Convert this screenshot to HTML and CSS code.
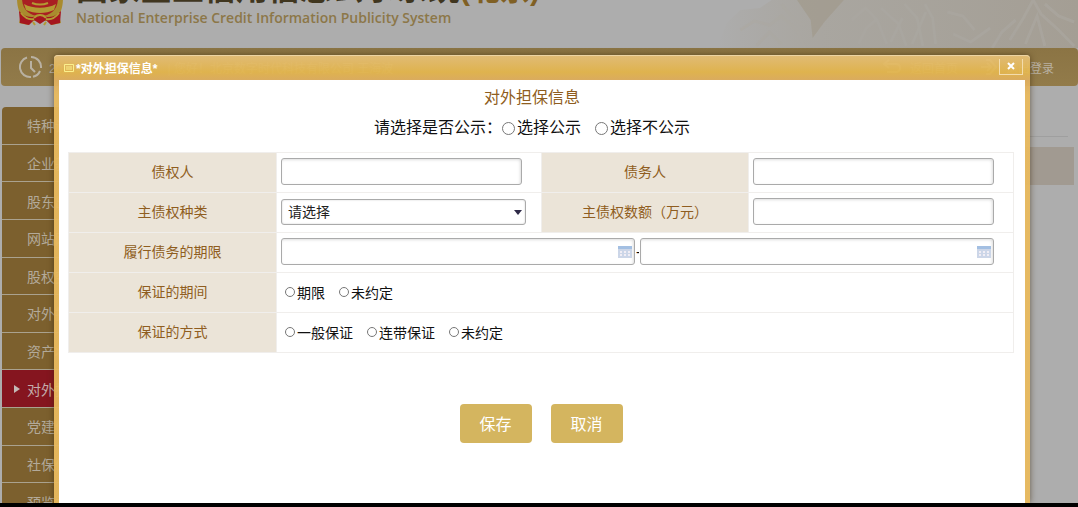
FILE: index.html
```
<!DOCTYPE html>
<html lang="zh-CN">
<head>
    <meta charset="UTF-8">
    <meta name="viewport" content="width=device-width, initial-scale=1.0">
    <title>对外担保信息</title>
    <link rel="stylesheet" href="styles.css">
</head>
<body>

    <div class="page">

        <header class="header">
            <svg class="emblem" viewBox="0 0 48 52">
                <path d="M24 1C9 1 1 11 1 24c0 8 2 14 4 17l-2 8 9 2 5-4h14l5 4 9-2-2-8c2-3 4-9 4-17C47 11 39 1 24 1z" fill="#a98b2e"/>
                <path d="M24 5C12 5 6 13 6 24s7 18 18 18 18-7 18-18S36 5 24 5z" fill="#a91f22"/>
                <path d="M13 25h22l-3-5H16zM8 30c9 5 23 5 32 0l-2 6c-8 4-20 4-28 0z" fill="#b39a33"/>
                <path d="M16 29c5 2 11 2 16 0" fill="none" stroke="#b39a33" stroke-width="2"/>
                <path d="M3 37c5 5 9 6 14 6l7-3 7 3c5 0 9-1 14-6l-1 12-9 2-5-5-6 4-6-4-5 5-9-2z" fill="#a5161f"/>
                <path d="M5 39c4 5 9 7 13 6M43 39c-4 5-9 7-13 6M18 44c3-4 9-4 12 0M17 48l2 3M30 48l-2 3" fill="none" stroke="#b39a33" stroke-width="2"/>
            </svg>
            <div class="brand">
                <div class="brand-name">国家企业信用信息公示系统<span>(北京)</span></div>
                <div class="brand-en">National Enterprise Credit Information Publicity System</div>
            </div>
            <svg class="mountain" viewBox="0 0 370 48" preserveAspectRatio="none">
                <defs>
                    <linearGradient id="fade">
                        <stop offset="0" stop-color="#a49c8e" stop-opacity="0"/>
                        <stop offset="0.3" stop-color="#a6a197" stop-opacity="0.6"/>
                        <stop offset="1" stop-color="#a49e94"/>
                    </linearGradient>
                </defs>
                <path d="M0 48l10-25 14-13 20-2 12-8h314v48z" fill="url(#fade)"/>
                <path d="M82 0l14 20 2 18 12-16 20-22z" fill="#a19a8c" opacity="0.7"/>
                <g fill="none" stroke="#aba8a2" stroke-width="3" opacity="0.6">
                    <path d="M24 30l14-9 16 4 12-9 16 14 8 18M40 46l14-14 12 12M66 4l12 14 12 8"/>
                    <path d="M138 20l14-12 12 12 10 24M145 44l8-16 10-8M168 8l18 16 8 22M192 4l13 14 6 28M213 4l8 14 3 26"/>
                    <path d="M178 42l12-24M200 44l14-32M236 12l16 4 12 14M242 34l18 8 20-14"/>
                    <path d="M300 40l14-22 10-18 8 14 18 16 16 16M316 44l12-28 8 30M336 4l14 12 16 6M306 20l-14 12-10 16"/>
                </g>
            </svg>
        </header>

        <div class="topbar">
            <svg class="clock" viewBox="0 0 24 24">
                <path d="M8 2.500A10 10 0 0 0 12 22M14 21.800A10 10 0 0 0 21 16M22 13A10 10 0 0 0 12 2M12 6v7l4 4"/>
            </svg>
            <span>2018年05月11日</span>
            <span class="welcome">| 您好！北京数字时代科技有限公司 王海波</span>
            <a class="top-link" href="#">
                <svg viewBox="0 0 20 16"><path d="M7 1L2 5l5 4M2 5h12q4 0 4 4t-4 4H5"/></svg>返回首页
            </a>
            <a class="top-link" href="#">
                <svg viewBox="0 0 20 16"><path d="M3 8h9M9 4l4 4-4 4M8 1h4l6 7-6 7H8"/></svg>退出登录
            </a>
        </div>

        <div class="content">
            <nav class="sidebar">
                <a href="#">特种设备信息</a>
                <a href="#">企业基本信息</a>
                <a href="#">股东出资信息</a>
                <a href="#">网站网店信息</a>
                <a href="#">股权变更信息</a>
                <a href="#">对外投资信息</a>
                <a href="#">资产状况信息</a>
                <a href="#" class="active">对外担保信息</a>
                <a href="#">党建信息</a>
                <a href="#">社保信息</a>
                <a href="#">预览并公示</a>
            </nav>
            <div class="main">
                <div class="main-title"></div>
                <div class="main-head"></div>
            </div>
        </div>

        <div class="dialog" role="dialog" aria-labelledby="dialog-title">
            <div class="dialog-head">
                <svg class="dialog-icon" viewBox="0 0 10 8"><path d="M.5.5h9v7h-9zM2 3h6M2 5h6"/></svg>
                <span id="dialog-title">*对外担保信息*</span>
                <button type="button" class="close" aria-label="关闭">
                    <svg viewBox="0 0 8 8"><path d="M1 1l6 6M7 1L1 7"/></svg>
                </button>
            </div>

            <form class="dialog-body">
                <div class="intro">
                    <h2>对外担保信息</h2>
                    <div class="publish">
                        <span>请选择是否公示：</span>
                        <label><input type="radio" name="publish">选择公示</label>
                        <label><input type="radio" name="publish">选择不公示</label>
                    </div>
                </div>

                <table>
                    <tr>
                        <th><label for="creditor">债权人</label></th>
                        <td><input type="text" id="creditor"></td>
                        <th><label for="debtor">债务人</label></th>
                        <td><input type="text" id="debtor"></td>
                    </tr>
                    <tr>
                        <th><label for="kind">主债权种类</label></th>
                        <td>
                            <div class="select">
                                <select id="kind"><option>请选择</option></select>
                            </div>
                        </td>
                        <th><label for="amount">主债权数额（万元）</label></th>
                        <td><input type="text" id="amount"></td>
                    </tr>
                    <tr>
                        <th><label for="date-from">履行债务的期限</label></th>
                        <td colspan="3">
                            <div class="period">
                                <div class="date">
                                    <input type="text" id="date-from">
                                    <svg viewBox="0 0 14 13"><path d="M0 1h14v12H0z" fill="#ccd6e8"/><path d="M0 1h14v3H0z" fill="#a3bfe2"/><path d="M2 6h2v2H2zM6 6h2v2H6zM10 6h2v2h-2zM2 9h2v2H2zM6 9h2v2H6zM10 9h2v2h-2z" fill="#f1eef5"/></svg>
                                </div>
                                <span>-</span>
                                <div class="date">
                                    <input type="text" id="date-to" aria-label="履行债务的期限（止）">
                                    <svg viewBox="0 0 14 13"><path d="M0 1h14v12H0z" fill="#ccd6e8"/><path d="M0 1h14v3H0z" fill="#a3bfe2"/><path d="M2 6h2v2H2zM6 6h2v2H6zM10 6h2v2h-2zM2 9h2v2H2zM6 9h2v2H6zM10 9h2v2h-2z" fill="#f1eef5"/></svg>
                                </div>
                            </div>
                        </td>
                    </tr>
                    <tr>
                        <th>保证的期间</th>
                        <td colspan="3">
                            <div class="choices">
                                <label><input type="radio" name="term">期限</label>
                                <label><input type="radio" name="term">未约定</label>
                            </div>
                        </td>
                    </tr>
                    <tr>
                        <th>保证的方式</th>
                        <td colspan="3">
                            <div class="choices">
                                <label><input type="radio" name="mode">一般保证</label>
                                <label><input type="radio" name="mode">连带保证</label>
                                <label><input type="radio" name="mode">未约定</label>
                            </div>
                        </td>
                    </tr>
                </table>

                <div class="actions">
                    <button type="button">保存</button>
                    <button type="button">取消</button>
                </div>
            </form>
        </div>

    </div>

</body>
</html>
```
FILE: styles.css
```
* {
    box-sizing: border-box;
}

body {
    margin: 0;
    font-family: "Liberation Sans", "Noto Sans CJK SC", sans-serif;
    font-size: 14px;
    background-color: #000;
}

.page {
    position: relative;
    height: calc(100vh - 4px);
    overflow: hidden;
    background-color: #adadad;
}

/* header */
.header {
    display: flex;
    align-items: flex-end;
    height: 48px;
    padding-left: 16px;
    overflow: hidden;
}

.emblem {
    flex: none;
    width: 48px;
    height: 52px;
    margin-bottom: 22px;
}

.brand {
    flex: none;
    margin-left: 12px;
    padding-bottom: 20px;
    white-space: nowrap;
}

.brand-name {
    font-size: 32px;
    font-weight: bold;
    line-height: 36px;
    color: #40361f;
}

.brand-name span {
    font-size: 30px;
    color: #806024;
}

.brand-en {
    font-family: "Open Sans", sans-serif;
    font-size: 14px;
    font-weight: 600;
    line-height: 20px;
    color: #8c7748;
}

.mountain {
    width: 34%;
    height: 48px;
    margin-left: auto;
}

/* bar under the header */
.topbar {
    display: flex;
    align-items: center;
    height: 38px;
    margin-left: 1px;
    padding: 0 24px 0 18px;
    border-radius: 4px;
    background: linear-gradient(#8b7444, #927b4a);
    color: #b9b1a2;
    font-size: 12px;
    white-space: nowrap;
}

.topbar svg {
    fill: none;
    stroke: #b9b1a2;
    stroke-width: 2;
}

.clock {
    width: 24px;
    height: 24px;
    margin-right: 6px;
}

.welcome {
    margin-left: 30px;
}

.top-link {
    display: flex;
    align-items: center;
    gap: 8px;
    margin-left: 20px;
    color: inherit;
    text-decoration: none;
}

.top-link svg {
    width: 20px;
    height: 16px;
}

.welcome + .top-link {
    margin-left: auto;
}

/* content behind the dialog */
.content {
    display: flex;
    padding: 21px 4px 0 2px;
}

.sidebar {
    display: grid;
    grid-auto-rows: 1fr;
    flex: none;
    width: 170px;
    height: 414px;
    border-radius: 4px 4px 0 0;
    overflow: hidden;
}

.sidebar a {
    display: flex;
    align-items: center;
    padding-left: 25px;
    border-bottom: 1px solid #aaa28f;
    background-color: #7c602e;
    color: #b3aa9a;
    font-size: 14px;
    text-decoration: none;
}

.sidebar .active {
    padding-left: 12px;
    background-color: #85151f;
    color: #c3acaa;
}

.sidebar .active::before {
    content: "";
    margin-right: 7px;
    border: 4px solid transparent;
    border-left: 6px solid #c3b9b6;
    border-right: 0;
}

.main {
    flex: 1;
    margin-left: 20px;
}

.main-title {
    height: 30px;
    margin-right: 6px;
    border-bottom: 1px solid #9f9f9f;
}

.main-head {
    height: 38px;
    margin-top: 10px;
    background-color: #a19a91;
}

/* dialog */
.dialog {
    position: absolute;
    top: 55px;
    right: 48px;
    bottom: 0;
    left: 54px;
    display: flex;
    flex-direction: column;
    padding: 0 5px;
    border-radius: 4px 4px 0 0;
    background: linear-gradient(rgba(229, 191, 122, 0.95), rgba(227, 182, 78, 0.95) 17px, rgba(222, 174, 96, 0.95) 25px, rgba(233, 186, 94, 0.95) 40px);
    box-shadow: 0 0 6px rgba(60, 40, 10, 0.6), inset 0 1px #ecd3a2;
}

.dialog-head {
    display: flex;
    align-items: center;
    height: 25px;
    padding-left: 5px;
    color: #fff;
    font-size: 12px;
    font-weight: bold;
}

.dialog-icon {
    width: 10px;
    height: 8px;
    margin-right: 2px;
    fill: none;
    stroke: #fbf08c;
}

.close {
    display: flex;
    align-items: center;
    justify-content: center;
    width: 24px;
    height: 16px;
    margin: 0 2px 2px auto;
    padding: 0;
    border: 1px solid #f3dcac;
    border-top: 0;
    background: none;
    cursor: pointer;
}

.close svg {
    width: 8px;
    height: 8px;
    fill: none;
    stroke: #fff;
    stroke-width: 2;
}

.dialog-body {
    flex: 1;
    padding: 6px 11px 0 9px;
    background-color: #fff;
}

.intro {
    height: 66px;
    padding-right: 18px;
}

h2 {
    margin: 0;
    font-size: 16px;
    font-weight: normal;
    line-height: 24px;
    text-align: center;
    color: #8f5d20;
}

.publish {
    display: flex;
    justify-content: center;
    padding-top: 6px;
    font-size: 16px;
    line-height: 24px;
    color: #111;
}

.publish label {
    display: flex;
    align-items: center;
    margin-right: 14px;
}

.publish label:last-child {
    margin-right: 0;
}

input[type="radio"] {
    appearance: none;
    width: 10px;
    height: 10px;
    margin: 0 2px 0 0;
    border: 1px solid #777;
    border-radius: 50%;
    background-color: #fff;
}

.publish input[type="radio"] {
    width: 13px;
    height: 13px;
}

input[type="radio"]:checked {
    background-color: #8f5d20;
}

table {
    width: 100%;
    table-layout: fixed;
    border-collapse: collapse;
}

th,
td {
    height: 40px;
    border: 1px solid #f0eeec;
}

th {
    width: 22%;
    padding: 0 0 4px;
    background-color: #ebe4d8;
    color: #8f5d20;
    font-weight: normal;
}

td {
    padding: 0 19px 2px 4px;
}

input[type="text"],
select {
    display: block;
    width: 100%;
    height: 27px;
    padding: 0 6px;
    border: 1px solid #aaa;
    border-radius: 3px;
    background-color: #fff;
    box-shadow: inset -1px 1px 3px #ddd;
    font-family: inherit;
    font-size: 14px;
    color: #222;
}

.select {
    position: relative;
    margin-right: -4px;
}

.select select {
    height: 26px;
    appearance: none;
    box-shadow: inset 0 0 2px #ccc;
}

/* drop-down arrow */
.select::after {
    content: "";
    position: absolute;
    top: 11px;
    right: 4px;
    border: 4px solid transparent;
    border-top: 5px solid #2e2a48;
    border-bottom: 0;
    pointer-events: none;
}

.period {
    display: flex;
    align-items: center;
    gap: 1px;
}

.period span {
    width: 3px;
    overflow: hidden;
}

.date {
    position: relative;
    flex: 1;
}

/* calendar button lies over the text box */
.date svg {
    position: absolute;
    top: 7px;
    right: 3px;
    width: 14px;
    height: 13px;
}

.choices {
    display: flex;
    gap: 14px;
    padding-left: 4px;
    color: #111;
}

.choices label {
    display: flex;
    align-items: center;
}

.actions {
    display: flex;
    justify-content: center;
    gap: 19px;
    padding-top: 51px;
}

.actions button {
    width: 72px;
    height: 39px;
    padding: 0 0 2px;
    border: 0;
    border-radius: 4px;
    background-color: #d4b55f;
    color: #fff;
    font-family: inherit;
    font-size: 16px;
    cursor: pointer;
}

.actions button:hover {
    background-color: #c8a750;
}
```
